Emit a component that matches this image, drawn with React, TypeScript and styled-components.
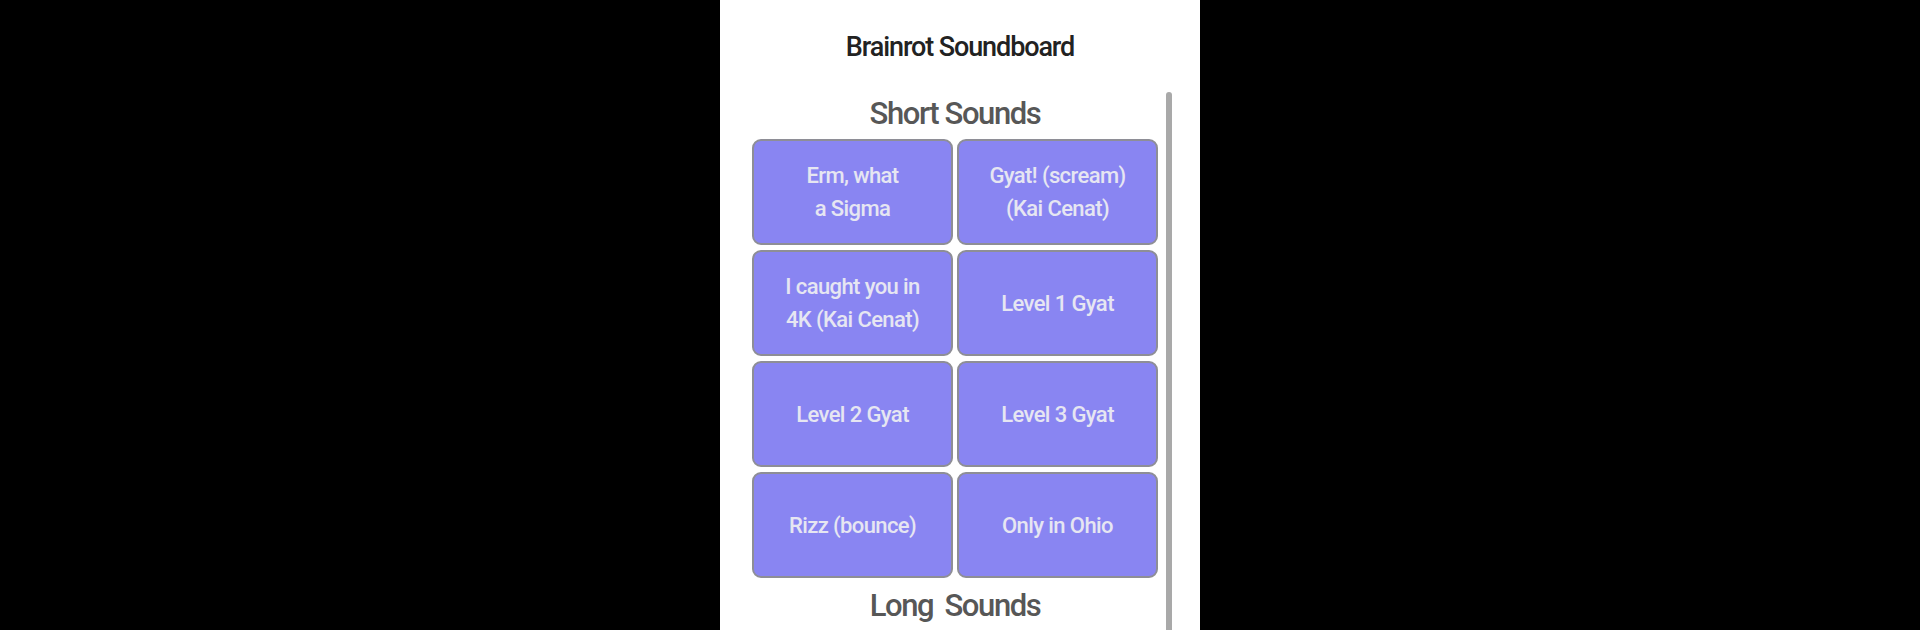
import React from "react";
import styled, { createGlobalStyle } from "styled-components";

const GlobalStyle = createGlobalStyle`
  html, body {
    margin: 0;
    padding: 0;
    background: #000;
  }
  #root {
    height: 630px;
  }
`;

const SHORT_SOUNDS = [
  ["Erm, what", "a Sigma"],
  ["Gyat! (scream)", "(Kai Cenat)"],
  ["I caught you in", "4K (Kai Cenat)"],
  ["Level 1 Gyat"],
  ["Level 2 Gyat"],
  ["Level 3 Gyat"],
  ["Rizz (bounce)"],
  ["Only in Ohio"],
];

const LONG_SOUNDS = [["Skibidi Toilet"], ["Fanum Tax"], ["Mewing Streak"], ["Sigma Grindset"]];

const Page = styled.div`
  height: 630px;
  display: flex;
  justify-content: center;
  background: #000;
  font-family: Roboto, "Liberation Sans", sans-serif;
`;

const Phone = styled.div`
  width: 480px;
  height: 630px;
  background: #fff;
  display: flex;
  flex-direction: column;
  overflow: hidden;
`;

const Header = styled.header`
  padding: 30px 0 28px;
  text-align: center;

  h1 {
    margin: 0;
    font-size: 27px;
    line-height: 34px;
    font-weight: 500;
    letter-spacing: -1.1px;
    color: #222;
  }
`;

const ScrollArea = styled.div`
  flex: 1;
  min-height: 0;
  display: flex;
  padding-left: 32px;
  gap: 8px;
`;

const Content = styled.div`
  width: 406px;
  display: flex;
  flex-direction: column;
`;

const Scrollbar = styled.div`
  width: 6px;
  background: #a9a9a9;
  border-radius: 3px 3px 0 0;
`;

const SectionTitle = styled.h2<{ $top?: number; $wide?: boolean }>`
  margin: ${(p) => p.$top ?? 2}px 0 5px;
  text-align: center;
  font-size: 31px;
  line-height: 40px;
  font-weight: 500;
  letter-spacing: -1.4px;
  word-spacing: ${(p) => (p.$wide ? "5px" : "0")};
  color: #575757;
`;

const Grid = styled.div`
  display: grid;
  grid-template-columns: 1fr 1fr;
  grid-auto-rows: 106px;
  gap: 5px 4px;
`;

const SoundButton = styled.button`
  display: flex;
  flex-direction: column;
  align-items: center;
  justify-content: center;
  border: 2px solid #8e8e96;
  border-radius: 9px;
  background: #8985f2;
  color: #e6e6f2;
  font-family: inherit;
  font-size: 22px;
  font-weight: 500;
  line-height: 33px;
  letter-spacing: -0.6px;
  padding: 0 8px;
  cursor: pointer;
`;

const App = () => (
  <>
    <GlobalStyle />
    <Page>
      <Phone>
        <Header>
          <h1>Brainrot Soundboard</h1>
        </Header>
        <ScrollArea>
          <Content>
            <SectionTitle>Short Sounds</SectionTitle>
            <Grid>
              {SHORT_SOUNDS.map((lines) => (
                <SoundButton key={lines.join(" ")}>
                  {lines.map((l) => (
                    <span key={l}>{l}</span>
                  ))}
                </SoundButton>
              ))}
            </Grid>
            <SectionTitle $top={8} $wide>
              Long Sounds
            </SectionTitle>
            <Grid>
              {LONG_SOUNDS.map((lines) => (
                <SoundButton key={lines.join(" ")}>
                  {lines.map((l) => (
                    <span key={l}>{l}</span>
                  ))}
                </SoundButton>
              ))}
            </Grid>
          </Content>
          <Scrollbar />
        </ScrollArea>
      </Phone>
    </Page>
  </>
);

export default App;
